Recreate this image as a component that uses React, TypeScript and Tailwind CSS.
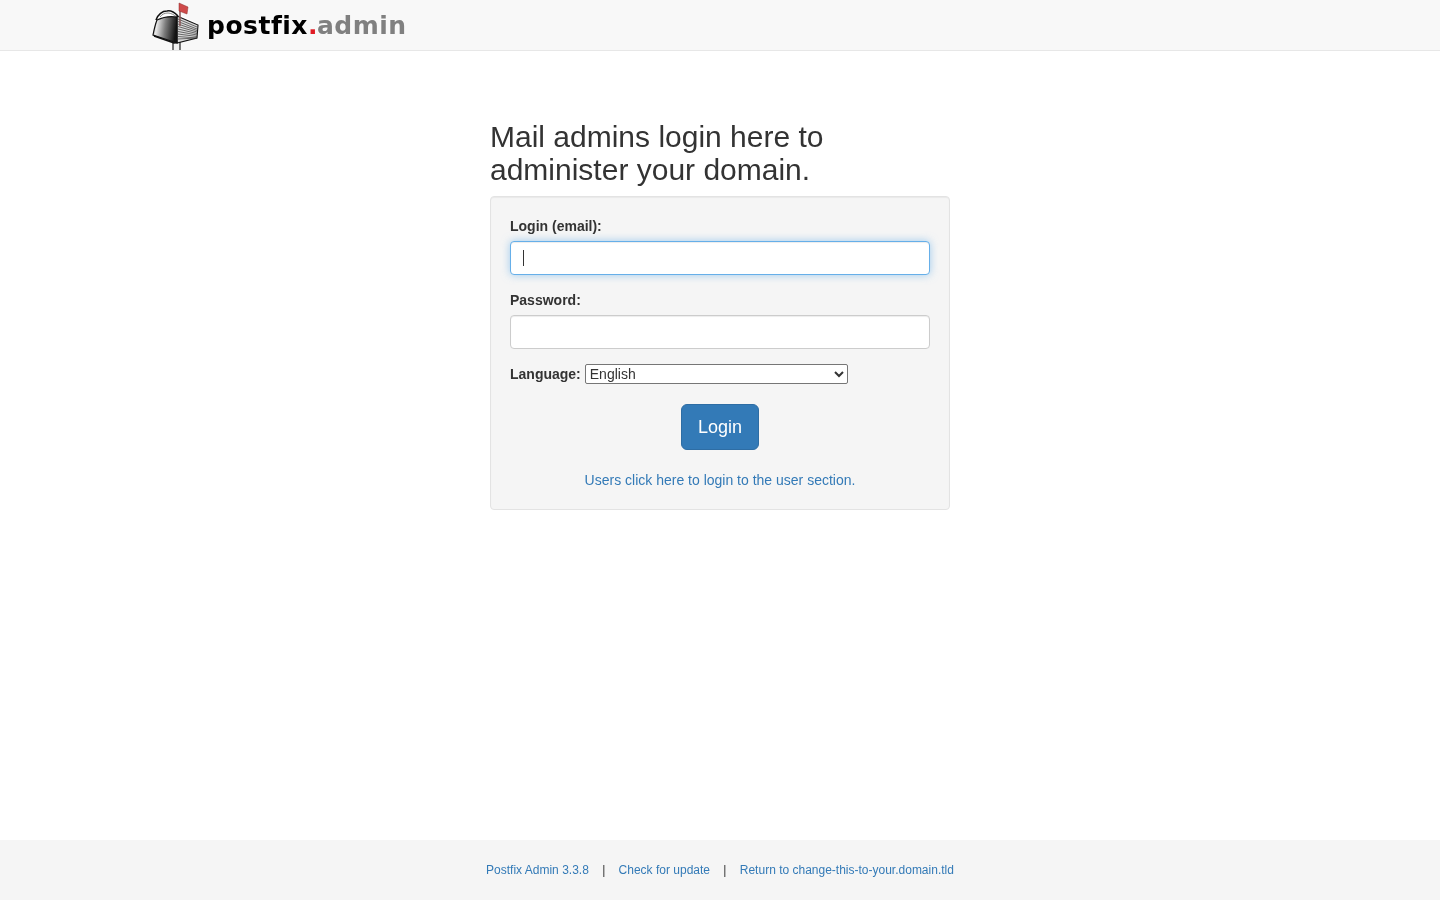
function MailboxLogo() {
  return (
    <svg width="52" height="50" viewBox="150 0 52 50" className="shrink-0">
      <defs>
        <linearGradient id="door" x1="0" y1="0" x2="1" y2="0.15">
          <stop offset="0" stopColor="#9a9a9a" />
          <stop offset="0.2" stopColor="#e8e8e8" />
          <stop offset="0.55" stopColor="#7d7d7d" />
          <stop offset="1" stopColor="#141414" />
        </linearGradient>
      </defs>
      {/* post */}
      <path d="M173 42h7v8h-7z" fill="#f0f0f0" />
      <path d="M173 43v7M180 42v8" stroke="#222" strokeWidth="1.2" fill="none" />
      {/* body */}
      <path d="M157 17c3-5 8-8 13-7 2 0 4 2 6 3l21 10c1 1 1 2 1 3v11l-21 5-20-6z" fill="#fff" />
      <path d="M177 16l21 9-1 13-20 5z" fill="#d9d9d9" stroke="#111" strokeWidth="1.1" />
      <path
        d="M178 19l19 8M178 21.500l19 7.500M178 24l19 6.500M178 26.500l19 5.500M178 29l19 4.500M178 31.500l19 3.500M178 34l19 2.500M178 36.500l19 1.500M178 39l19-1"
        stroke="#333"
        strokeWidth="0.7"
      />
      {/* arch over the door */}
      <path d="M156 20c2-5 6-9 11-9 4-1 8 2 11 5" fill="none" stroke="#111" strokeWidth="1.6" />
      <path d="M160 17c2-3 5-4 8-4 3 0 6 2 9 4" fill="none" stroke="#666" strokeWidth="0.8" />
      {/* door */}
      <path d="M157 20c6-3 14-4 20-3v26l-3-1-21-7c1-5 2-10 4-15z" fill="url(#door)" stroke="#111" strokeWidth="1.2" />
      <path d="M154 36l20 7c1 0 2 0 3-1" fill="none" stroke="#111" strokeWidth="1.4" />
      {/* flag */}
      <path d="M180 8v18" stroke="#8a5a5a" strokeWidth="1.6" />
      <path d="M179 3l9 4-1 7-8-3z" fill="#cf4a4a" stroke="#8c2f2c" strokeWidth="0.5" />
    </svg>
  );
}

export default function App() {
  return (
    <div className="flex min-h-screen flex-col font-['Liberation_Sans',Arial,sans-serif] text-sm leading-5 text-[#333] will-change-transform">
      <nav className="h-[51px] border-b border-[#e7e7e7] bg-[#f8f8f8]">
        <div className="mx-auto flex h-[50px] w-[1170px] items-center px-[15px]">
          <MailboxLogo />
          <span className="ml-[5px] pt-[2px] font-['DejaVu_Sans',sans-serif] text-[25px] leading-[48px] font-bold tracking-[0.5px] text-black">
            postfix<span className="text-[#e01b24]">.</span>
            <span className="ml-[-1px] tracking-[0.5px] text-[#808080]">admin</span>
          </span>
        </div>
      </nav>

      <main className="flex flex-1 justify-center pt-[69px]">
        <div className="w-[460px]">
          <h2 className="mb-[10px] text-[30px] leading-[33px] font-medium">
            Mail admins login here to
            <br />
            administer your domain.
          </h2>
          <form className="rounded border border-[#e3e3e3] bg-[#f5f5f5] p-[19px] shadow-[inset_0_1px_1px_rgba(0,0,0,0.05)]">
            <div className="mb-[15px]">
              <label className="mb-[5px] block font-bold">Login (email):</label>
              <div className="relative">
                <input
                  type="text"
                  className="block h-[34px] w-full rounded border border-[#66afe9] bg-white px-3 py-[6px] shadow-[inset_0_1px_1px_rgba(0,0,0,0.075),0_0_8px_rgba(102,175,233,0.6)] outline-none"
                />
                <span className="absolute top-[9px] left-[13px] h-4 w-px bg-[#333]" />
              </div>
            </div>
            <div className="mb-[15px]">
              <label className="mb-[5px] block font-bold">Password:</label>
              <input
                type="password"
                className="block h-[34px] w-full rounded border border-[#ccc] bg-white px-3 py-[6px] shadow-[inset_0_1px_1px_rgba(0,0,0,0.075)] outline-none"
              />
            </div>
            <div className="mb-5 flex h-5 items-center">
              <label className="mr-[4px] font-bold">Language:</label>
              <select className="h-5 w-[263px] rounded-[2px] border border-[#767676] bg-white text-sm text-[#333]">
                <option>English</option>
              </select>
            </div>
            <div className="mb-5 flex justify-center">
              <button
                type="button"
                className="h-[46px] w-[78px] rounded-md border border-[#2e6da4] bg-[#337ab7] text-lg leading-[25px] text-white"
              >
                Login
              </button>
            </div>
            <div className="text-center">
              <a href="#" className="text-[#337ab7]">
                Users click here to login to the user section.
              </a>
            </div>
          </form>
        </div>
      </main>

      <footer className="flex h-[60px] items-center justify-center bg-[#f5f5f5] text-xs">
        <a href="#" className="text-[#337ab7]">
          Postfix Admin 3.3.8
        </a>
        <span className="mx-[13.34px]">|</span>
        <a href="#" className="text-[#337ab7]">
          Check for update
        </a>
        <span className="mx-[13.34px]">|</span>
        <a href="#" className="text-[#337ab7]">
          Return to change-this-to-your.domain.tld
        </a>
      </footer>
    </div>
  );
}
